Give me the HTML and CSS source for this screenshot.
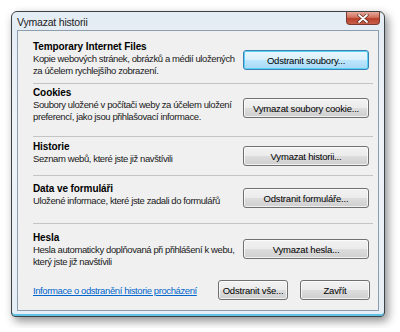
FILE: index.html
```html
<!DOCTYPE html>
<html lang="cs">
  <head>
    <meta charset="UTF-8" />
    <title>Vymazat historii</title>
    <link rel="stylesheet" href="styles.css">
  </head>
  <body>
    <div class="window">
      <div class="titlebar">
        <span class="title">Vymazat historii</span>
        <span class="close">
          <svg width="12" height="9" viewBox="0 0 12 9">
            <path d="M2 1 L10 8 M10 1 L2 8" stroke="#5a2a20" stroke-width="3.2" stroke-linecap="round" />
            <path d="M2 1 L10 8 M10 1 L2 8" stroke="#fff" stroke-width="1.8" stroke-linecap="round" />
          </svg>
        </span>
      </div>
      <div class="client">
        <div class="section s1">
          <div class="info">
            <h3>Temporary Internet Files</h3>
            <p>Kopie webových stránek, obrázků a médií uložených<br>za účelem rychlejšího zobrazení.</p>
          </div>
          <button class="btn default">Odstranit soubory...</button>
        </div>
        <div class="section s2">
          <div class="info">
            <h3>Cookies</h3>
            <p>Soubory uložené v počítači weby za účelem uložení<br>preferencí, jako jsou přihlašovací informace.</p>
          </div>
          <button class="btn">Vymazat soubory cookie...</button>
        </div>
        <div class="section s3">
          <div class="info">
            <h3>Historie</h3>
            <p>Seznam webů, které jste již navštívili</p>
          </div>
          <button class="btn">Vymazat historii...</button>
        </div>
        <div class="section s4">
          <div class="info">
            <h3>Data ve formuláři</h3>
            <p>Uložené informace, které jste zadali do formulářů</p>
          </div>
          <button class="btn">Odstranit formuláře...</button>
        </div>
        <div class="section s5">
          <div class="info">
            <h3>Hesla</h3>
            <p>Hesla automaticky doplňovaná při přihlášení k webu,<br>který jste již navštívili</p>
          </div>
          <button class="btn">Vymazat hesla...</button>
        </div>
        <div class="footer">
          <a href="#">Informace o odstranění historie procházení</a>
          <button class="btn small">Odstranit vše...</button>
          <button class="btn small">Zavřít</button>
        </div>
      </div>
    </div>
  </body>
</html>
```

FILE: styles.css
```css
html {
  font-family: "Liberation Sans", Arial, sans-serif;
  font-size: 9.5px;
  letter-spacing: -0.4px;
  color: #1a1a1a;
  background: #fff;
}
body {
  margin: 0;
  padding: 11px;
}
.window {
  box-sizing: border-box;
  width: 374px;
  height: 306px;
  display: flex;
  flex-direction: column;
  padding: 0 5px 5px;
  border: 1px solid #3d4247;
  border-radius: 6px 6px 4px 4px;
  background: linear-gradient(#e4ecf4, #eef3f8 40%, #e6eef5);
  box-shadow: 3px 4px 10px rgba(0, 0, 0, 0.45), inset 0 -2px 0 #5fc3e6;
}
.titlebar {
  height: 18px;
  display: flex;
  align-items: center;
  justify-content: space-between;
}
.title {
  font-size: 10.5px;
  letter-spacing: -0.2px;
  color: #222;
  padding-top: 2px;
}
.close {
  width: 32px;
  height: 12px;
  margin-top: -5px;
  margin-right: -1px;
  display: flex;
  align-items: center;
  justify-content: center;
  border: 1px solid #7a3a30;
  border-top: none;
  border-radius: 0 0 4px 4px;
  background: linear-gradient(#e8a99a, #d0705c 45%, #b8402a 55%, #c8604a);
}
.client {
  flex: 1;
  display: flex;
  flex-direction: column;
  padding: 0 5px 0 15px;
  border: 1px solid #8b9db0;
  background: #f0f0f0;
}
.section {
  box-sizing: border-box;
  display: flex;
  align-items: flex-start;
  border-bottom: 1px solid #c4c4c4;
}
.info {
  flex: 1;
  min-width: 0;
  white-space: nowrap;
}
.info h3 {
  margin: 0;
  font-size: 10px;
  letter-spacing: -0.1px;
  line-height: 13px;
  font-weight: bold;
  color: #000;
}
.info p {
  margin: 0;
  line-height: 11.5px;
}
.s1 { height: 53px; padding-top: 9px; }
.s1 .btn { margin-top: 10px; }
.s2 { height: 53px; padding-top: 2px; }
.s2 .btn { margin-top: 12px; }
.s3 { height: 39px; padding-top: 3px; }
.s3 .btn { margin-top: 6px; }
.s4 { height: 48px; padding-top: 6px; }
.s4 .btn { margin-top: 6px; }
.s5 { border-bottom: none; padding-top: 7px; }
.s5 .btn { margin-top: 8px; }
.btn {
  flex-shrink: 0;
  box-sizing: border-box;
  width: 126px;
  height: 20px;
  margin-right: 4px;
  padding: 0;
  white-space: nowrap;
  font-family: inherit;
  font-size: 9.5px;
  letter-spacing: -0.2px;
  color: #000;
  border: 1px solid #707070;
  border-radius: 3px;
  background: linear-gradient(#f2f2f2, #ebebeb 50%, #dddddd 50%, #cfcfcf);
  box-shadow: inset 0 0 0 1px rgba(255, 255, 255, 0.7);
}
.btn.default {
  border-color: #3c7fb1;
  background: linear-gradient(#eaf6fd, #d9f0fc 50%, #bee6fd 50%, #a7d9f5);
  box-shadow: inset 0 0 0 1px #5ad2f7;
}
.footer {
  margin-top: auto;
  padding-bottom: 10px;
  display: flex;
  align-items: center;
  gap: 12px;
}
.footer a {
  margin-right: auto;
  color: #0066cc;
  text-decoration: underline;
  white-space: nowrap;
}
.btn.small {
  width: 70px;
  margin-right: 0;
}
.btn.small:last-child {
  margin-right: 3px;
}
```
